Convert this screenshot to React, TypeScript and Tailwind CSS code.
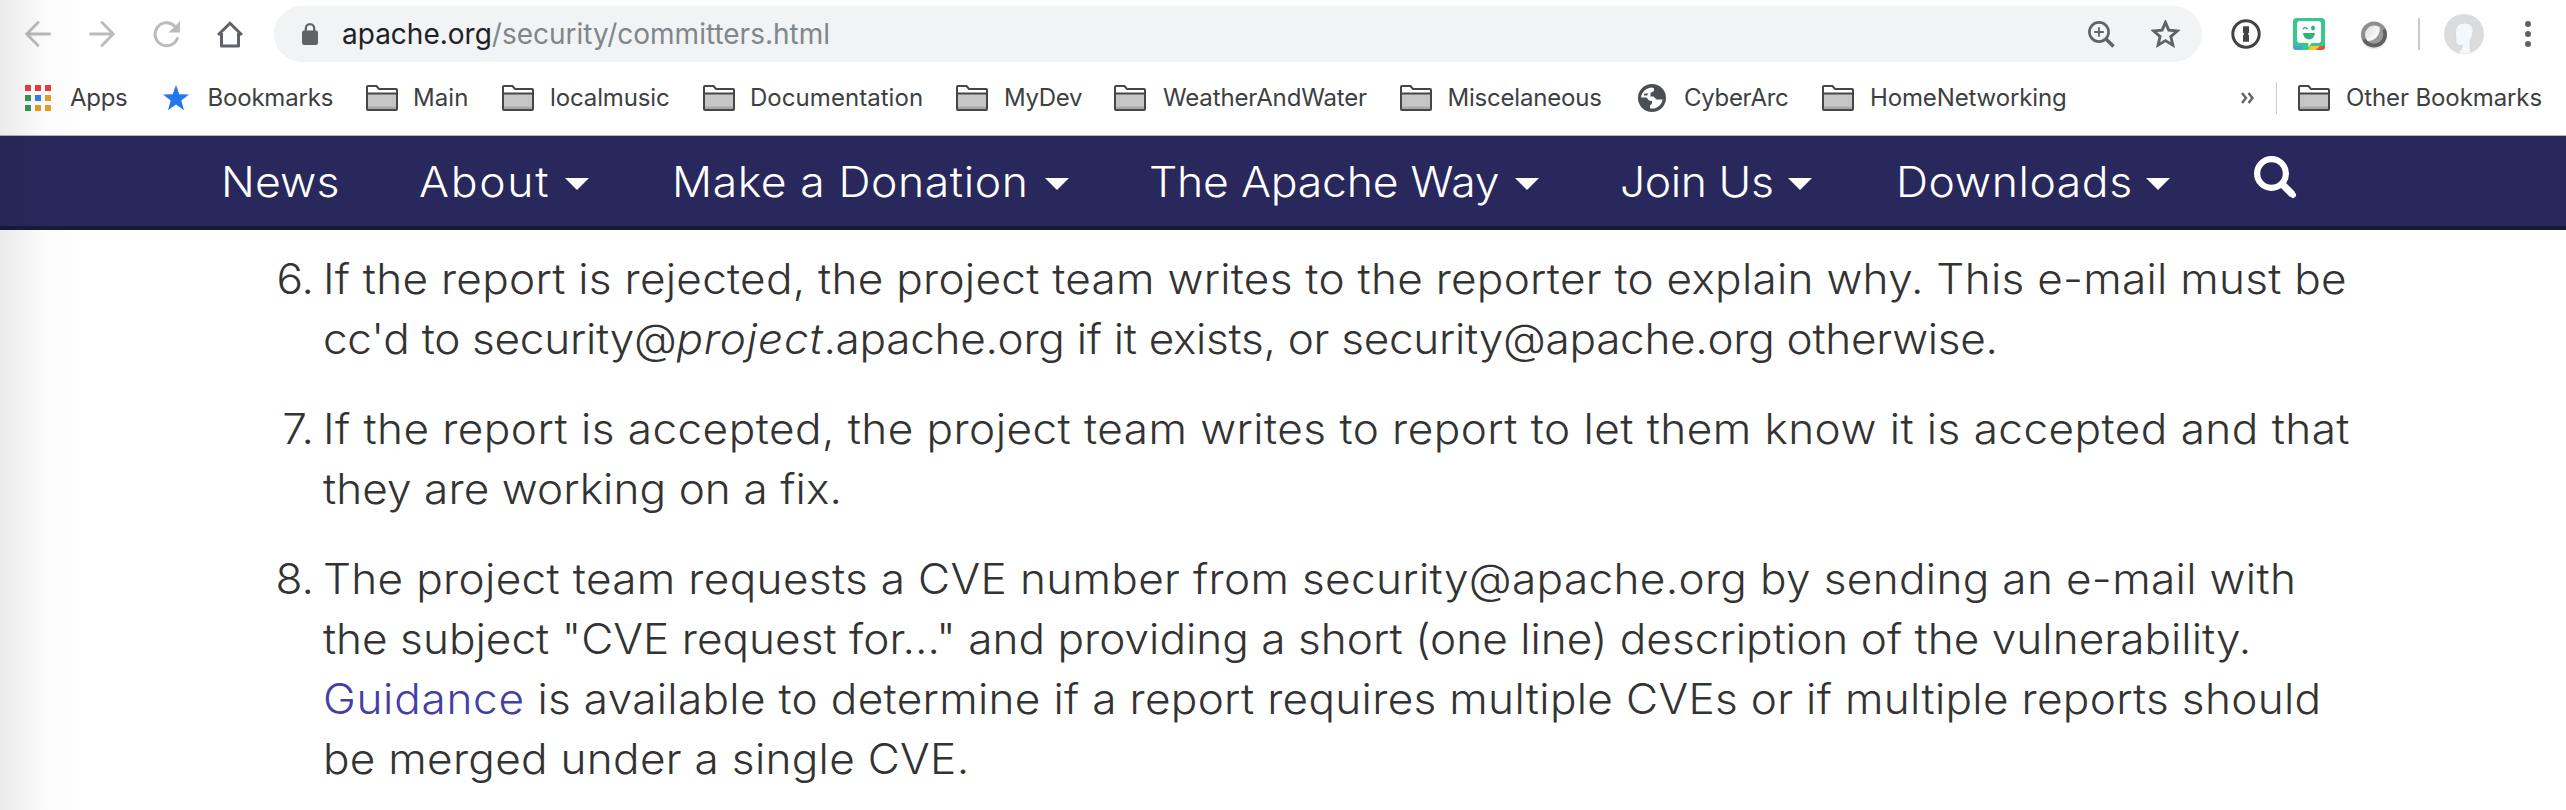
import React from 'react';

function Folder() {
  return (
    <svg width="32" height="26" viewBox="0 0 32 26" className="shrink-0" fill="none">
      <path d="M1 24V2a1 1 0 0 1 1-1h8.5l2.5 3H30a1 1 0 0 1 1 1v19a1 1 0 0 1-1 1H2a1 1 0 0 1-1-1Z" fill="#fff" />
      <path d="M1 8.5h30V24H1Z" fill="#c6c6c6" />
      <path d="M1 21.5h30V24H1Z" fill="#a9a9a9" />
      <path d="M1 8.5h30M1 24V2a1 1 0 0 1 1-1h8.5l2.5 3H30a1 1 0 0 1 1 1v19a1 1 0 0 1-1 1H2a1 1 0 0 1-1-1Z" stroke="#464646" strokeWidth="2" />
    </svg>
  );
}

function Globe() {
  return (
    <svg width="28" height="28" viewBox="0 0 28 28" className="shrink-0">
      <circle cx="14" cy="14" r="14" fill="#4b4f54" />
      <path
        d="M3 13.5C3.6 8 8.2 3.6 14 3.4L16 4.5V7L12.5 9V12.5H15.5L18.5 15.5H24.6C24 20.5 19.6 24.6 14 24.6H12V21.5L14 19.5V17L11 16.5L8.5 13.5Z"
        fill="#fff"
      />
      <path d="M5.6 16.5L10.5 21V23C8 22.2 5.8 19.5 5.6 16.5ZM6.5 9.5H10.5L9 11.5H5.8Z" fill="#4b4f54" />
    </svg>
  );
}

const bookmarks = [
  { label: 'Main', box: 'w-[136px]', gap: 'gap-[15px]', track: 'tracking-[0.1px]' },
  { label: 'localmusic', box: 'w-[200.5px]', gap: 'gap-[16px]', track: 'tracking-[-0.12px]' },
  { label: 'Documentation', box: 'w-[253.5px]', gap: 'gap-[15.5px]', track: 'tracking-[0.05px]' },
  { label: 'MyDev', box: 'w-[158px]', gap: 'gap-[16px]', track: 'tracking-[-0.3px]' },
  { label: 'WeatherAndWater', box: 'w-[286px]', gap: 'gap-[17px]', track: 'tracking-[-0.15px]' },
  { label: 'Miscelaneous', box: 'w-[238px]', gap: 'gap-[15.5px]', track: 'tracking-[-0.2px]' },
  { label: 'CyberArc', box: 'w-[184px]', gap: 'gap-[18px]', track: 'tracking-[-0.3px]', globe: true },
  { label: 'HomeNetworking', box: 'w-[260px]', gap: 'gap-[16px]', track: 'tracking-[-0.13px]' },
];

const menu = [
  { label: 'News', box: 'w-[114px] mr-[83.5px]', track: 'tracking-[0.1px]', caret: false },
  { label: 'About', box: 'w-[170px] mr-[83px]', track: 'tracking-[1.6px]', caret: true },
  { label: 'Make a Donation', box: 'w-[397px] mr-[80px]', track: 'tracking-[0.55px]', caret: true },
  { label: 'The Apache Way', box: 'w-[390px] mr-[81px]', track: 'tracking-[-0.2px]', caret: true },
  { label: 'Join Us', box: 'w-[192px] mr-[84px]', track: 'tracking-[-0.4px]', caret: true },
  { label: 'Downloads', box: 'w-[274.5px] mr-[83.5px]', track: 'tracking-[0.55px]', caret: true },
];

function Toolbar() {
  return (
    <div className="flex h-[68px] items-center pl-[25px]">
      <svg width="26" height="26" viewBox="0 0 26 26" fill="none" stroke="#babbbd" strokeWidth="2.8" strokeLinecap="round">
        <path d="M24.5 13H2M13 1.5L1.7 13L13 24.5" />
      </svg>
      <svg width="26" height="26" viewBox="0 0 26 26" className="ml-[38px]" fill="none" stroke="#babbbd" strokeWidth="2.8" strokeLinecap="round">
        <path d="M1.5 13H24M13 1.5L24.3 13L13 24.5" />
      </svg>
      <svg width="27" height="27" viewBox="0 0 27 27" className="ml-[38px]" fill="none">
        <path d="M24.3 17.5A11.5 11.5 0 1 1 21.8 5.2" stroke="#babbbd" strokeWidth="3" strokeLinecap="round" />
        <path d="M27 0V11.5H15.5Z" fill="#babbbd" />
      </svg>
      <svg width="26" height="27" viewBox="0 0 26 27" className="ml-[37px]" fill="none" stroke="#5f6368" strokeWidth="3">
        <path d="M1 14L13 2.2L25 14M4.5 12V25H21.5V12" strokeLinejoin="round" />
      </svg>

      <div className="ml-[31px] flex h-14 w-[1928px] items-center rounded-full bg-[#f1f3f4] pl-7 pr-[22px]">
        <svg width="16" height="22" viewBox="0 0 16 22" fill="none">
          <rect x="0" y="7.5" width="16" height="14.5" rx="2" fill="#5f6368" />
          <path d="M3.8 9V5.3A4.2 4.2 0 0 1 12.2 5.3V9" stroke="#5f6368" strokeWidth="2.2" />
        </svg>
        <span className="ml-6 text-[28px] leading-9 text-[#80868b]">
          <span className="text-[#202124]">apache.org</span>/security/committers.html
        </span>
        <svg width="27" height="27" viewBox="0 0 27 27" className="ml-auto" fill="none" stroke="#5f6368">
          <circle cx="11" cy="11" r="9.6" strokeWidth="2.6" />
          <path d="M11 6.2V15.8M6.2 11H15.8" strokeWidth="1.8" />
          <path d="M17.5 17.5L25.5 25.5" strokeWidth="3.6" />
        </svg>
        <svg width="29" height="28" viewBox="0 0 29 28" className="ml-9" fill="none" stroke="#5f6368" strokeWidth="2.6">
          <path d="M14.5 3.3L17.5 10.4L25.3 11.1L19.4 16.3L21.2 24L14.5 19.9L7.8 24L9.6 16.3L3.7 11.1L11.5 10.4Z" transform="translate(-1.5 -1.3) scale(1.1)" />
        </svg>
      </div>

      <svg width="30" height="30" viewBox="0 0 30 30" className="ml-[29px]">
        <circle cx="15" cy="15" r="13.2" fill="#fff" stroke="#434343" strokeWidth="3" />
        <path d="M12 7.3H18V13.5L16.8 15L18 16.3V22.7H12V16.5L13.2 15L12 13.5Z" fill="#434343" />
      </svg>
      <svg width="32" height="32" viewBox="0 0 32 32" className="ml-8">
        <defs>
          <clipPath id="tile"><rect width="32" height="32" rx="3.5" /></clipPath>
        </defs>
        <g clipPath="url(#tile)">
          <rect width="32" height="32" fill="#39c88c" />
          <path d="M0 28H10L7.5 32H0Z" fill="#4a9be8" />
          <path d="M18 28H27L23 32H14.5Z" fill="#fbc928" />
          <path d="M27 28H32V32H23Z" fill="#ee4b3c" />
        </g>
        <path d="M7 3H25A3 3 0 0 1 28 6V22A3 3 0 0 1 25 25H18.5L15.5 29.5V25H7A3 3 0 0 1 4 22V6A3 3 0 0 1 7 3Z" fill="#fff" />
        <path d="M10 15H22A6 6.5 0 0 1 10 15Z" fill="#2fb57c" />
        <path d="M10 11.2Q12.3 7.8 14.5 11.2" fill="none" stroke="#2fb57c" strokeWidth="1.6" />
        <ellipse cx="20" cy="10" rx="2" ry="2.5" fill="#2fb57c" />
      </svg>
      <svg width="30" height="31" viewBox="0 0 30 31" className="ml-[34px]">
        <defs>
          <linearGradient id="rim" x1="0.3" y1="0.1" x2="0.7" y2="0.9">
            <stop offset="0.45" stopColor="#8f8f8f" />
            <stop offset="0.55" stopColor="#5f5f5f" />
          </linearGradient>
          <linearGradient id="pearl" x1="0.15" y1="0.15" x2="0.85" y2="0.85">
            <stop offset="0" stopColor="#e2e2e2" />
            <stop offset="1" stopColor="#ffffff" />
          </linearGradient>
        </defs>
        <circle cx="15" cy="17" r="13.5" fill="#ececec" />
        <circle cx="15" cy="15.5" r="13" fill="url(#rim)" />
        <circle cx="15" cy="15.5" r="9.3" fill="#9a9a9a" />
        <path d="M20.5 8C22 14 17 22 8.500 22A9.3 9.3 0 0 1 20.500 8Z" fill="url(#pearl)" />
      </svg>
      <div className="ml-[29px] h-8 w-0.5 bg-[#cbcbcb]" />
      <svg width="40" height="40" viewBox="0 0 40 40" className="ml-6">
        <defs>
          <clipPath id="face"><circle cx="20" cy="20" r="20" /></clipPath>
        </defs>
        <circle cx="20" cy="20" r="20" fill="#dcdcdc" />
        <path
          clipPath="url(#face)"
          d="M11.5 18C11.5 12 15 9 20.5 9C26.5 9 29.5 12.5 29 18C28.7 22 26.5 25 26 28C25.8 32 26 36 27.5 40H13.5C16 37 18.5 34 18.5 31.5C14 32 12 31 12 27Z"
          fill="#f5f8fa"
          stroke="#cfd6dc"
          strokeWidth="0.8"
        />
      </svg>
      <svg width="6" height="26" viewBox="0 0 6 26" className="ml-[41px]" fill="#5f6368">
        <circle cx="3" cy="3" r="3" />
        <circle cx="3" cy="13" r="3" />
        <circle cx="3" cy="23" r="3" />
      </svg>
    </div>
  );
}

function BookmarksBar() {
  return (
    <div className="flex h-[60px] items-center whitespace-nowrap pl-[25px] text-[24px] leading-8 text-[#3c4043]">
      <div className="flex w-[138px] shrink-0 items-center gap-[19px]">
        <div className="grid grid-cols-3 gap-1">
          <i className="size-1.5 bg-[#ee3b3b]" />
          <i className="size-1.5 bg-[#ee3b3b]" />
          <i className="size-1.5 bg-[#ee3b3b]" />
          <i className="size-1.5 bg-[#339a58]" />
          <i className="size-1.5 bg-[#2787ee]" />
          <i className="size-1.5 bg-[#eb9d23]" />
          <i className="size-1.5 bg-[#339a58]" />
          <i className="size-1.5 bg-[#eb9d23]" />
          <i className="size-1.5 bg-[#eb9d23]" />
        </div>
        <span className="tracking-[-0.3px]">Apps</span>
      </div>
      <div className="flex w-[203px] shrink-0 items-center gap-[18.5px]">
        <svg width="26" height="26" viewBox="0 0 26 26" fill="#2477ea">
          <path d="M13 0L16.3 9.3L26 9.6L18.3 15.6L21 25.2L13 19.6L5 25.2L7.7 15.6L0 9.6L9.7 9.3Z" />
        </svg>
        <span className="tracking-[-0.2px]">Bookmarks</span>
      </div>
      {bookmarks.map((b) => (
        <div key={b.label} className={`flex shrink-0 items-center ${b.gap} ${b.box}`}>
          {b.globe ? <Globe /> : <Folder />}
          <span className={b.track}>{b.label}</span>
        </div>
      ))}
      <div className="ml-auto flex items-center pr-6">
        <svg width="13" height="12" viewBox="0 0 13 12" fill="none" stroke="#5f6368" strokeWidth="2.4">
          <path d="M1 1L5 6L1 11M7.5 1L11.5 6L7.5 11" />
        </svg>
        <div className="ml-[22px] h-8 w-px bg-[#cfcfcf]" />
        <div className="ml-[21px] flex items-center gap-4">
          <Folder />
          <span className="tracking-[-0.1px]">Other Bookmarks</span>
        </div>
      </div>
    </div>
  );
}

function SiteNav() {
  return (
    <nav className="flex h-[94px] items-center whitespace-nowrap border-b-4 border-[#1a1939] bg-[#29285d] pl-[221px] text-[42px] font-light leading-[60px] text-white">
      {menu.map((m) => (
        <div key={m.label} className={`flex shrink-0 items-center justify-between ${m.box}`}>
          <span className={`mt-px origin-left scale-x-106 ${m.track}`}>{m.label}</span>
          {m.caret && (
            <svg width="24" height="12" viewBox="0 0 24 12" className="mt-1.5 shrink-0" fill="#fff">
              <path d="M0 0H24L12 12Z" />
            </svg>
          )}
        </div>
      ))}
      <svg width="43" height="43" viewBox="0 0 43 43" className="mb-2 shrink-0" fill="none" stroke="#fff">
        <circle cx="17.5" cy="17.5" r="14.4" strokeWidth="6.2" />
        <path d="M27 27L38.5 38.5" strokeWidth="7" />
        <path d="M37 37L39 39" strokeWidth="6" strokeLinecap="round" />
      </svg>
    </nav>
  );
}

function Procedure() {
  return (
    <ol className="flex origin-left scale-x-105 flex-col gap-[30px] whitespace-nowrap pt-[19px] text-[42px] font-light leading-[60px] text-[#333]">
      <li className="flex">
        <span className="mr-[8.5px] w-[299px] text-right">6.</span>
        <div>
          <p className="tracking-[0.25px]">If the report is rejected, the project team writes to the reporter to explain why. This e-mail must be</p>
          <p className="tracking-[-0.28px]">
            cc'd to security@<em className="tracking-[0.8px]">project</em>.apache.org if it exists, or security@apache.org otherwise.
          </p>
        </div>
      </li>
      <li className="flex">
        <span className="mr-[8.5px] w-[299px] text-right">7.</span>
        <div>
          <p className="tracking-[0.43px]">If the report is accepted, the project team writes to report to let them know it is accepted and that</p>
          <p className="tracking-[0.09px]">they are working on a fix.</p>
        </div>
      </li>
      <li className="flex">
        <span className="mr-[8.5px] w-[299px] text-right">8.</span>
        <div>
          <p className="tracking-[0.32px]">The project team requests a CVE number from security@apache.org by sending an e-mail with</p>
          <p className="tracking-[0.03px]">the subject "CVE request for..." and providing a short (one line) description of the vulnerability.</p>
          <p className="tracking-[0.3px]">
            <a className="tracking-[0.7px] text-[#4240a8]">Guidance</a> is available to determine if a report requires multiple CVEs or if multiple reports should
          </p>
          <p className="tracking-[0.28px]">be merged under a single CVE.</p>
        </div>
      </li>
    </ol>
  );
}

export default function App() {
  return (
    <div className="relative h-[810px] w-[2566px] overflow-hidden bg-white font-['Inter',sans-serif]">
      <Toolbar />
      <BookmarksBar />
      <div className="mt-[7px] h-px bg-[#b5b7b5]" />
      <SiteNav />
      <Procedure />
      <div className="pointer-events-none absolute inset-y-0 left-0 w-[84px] bg-linear-to-r from-black/8 via-black/2 to-transparent" />
    </div>
  );
}
